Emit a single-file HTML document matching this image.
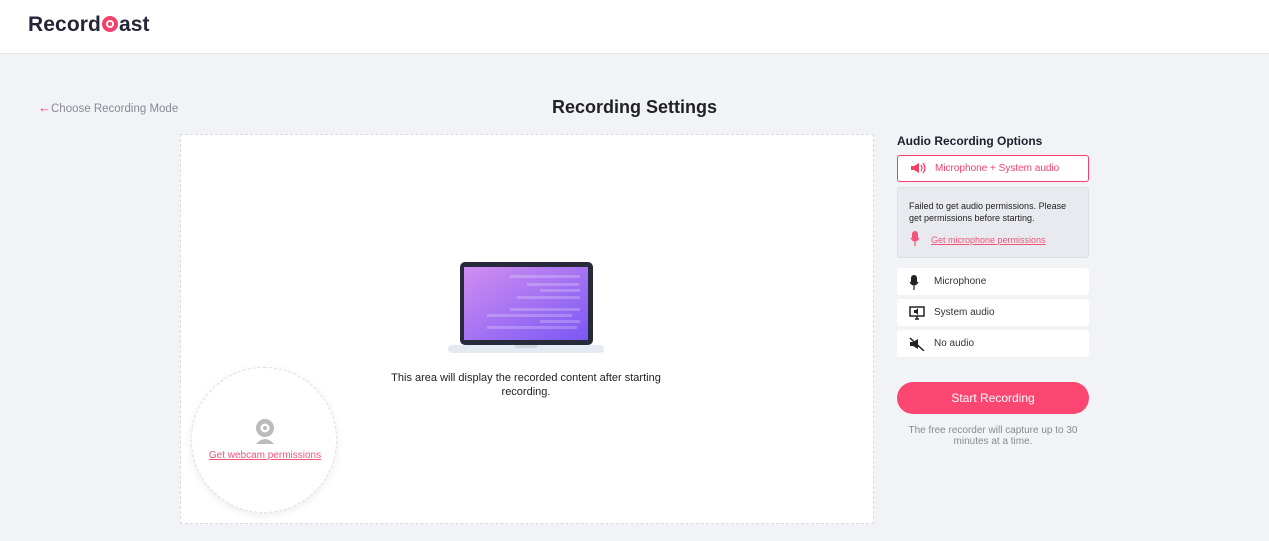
<!DOCTYPE html>
<html><head><style>
*{box-sizing:border-box;margin:0;padding:0}
body{width:1269px;height:541px;overflow:hidden;background:#f2f3f7;font-family:"Liberation Sans",sans-serif;position:relative}
.hdr{position:absolute;left:0;top:0;width:1269px;height:54px;background:#fff;border-bottom:1px solid #e6e7eb}
.logo{position:absolute;left:28px;top:13px;font-size:21px;font-weight:bold;color:#25253a;letter-spacing:0.1px}
.back{position:absolute;left:38px;top:100px;font-size:11.5px;color:#8a8a94}
.back b{color:#f43f6a;font-weight:bold;font-size:13px}
h1{position:absolute;left:0;width:1269px;text-align:center;top:97px;font-size:18px;font-weight:bold;color:#222}
.canvas{position:absolute;left:180px;top:134px;width:694px;height:390px;background:#fff;border:1px dashed #d8d9de}
.msg{position:absolute;left:385px;top:371px;width:282px;text-align:center;font-size:11px;line-height:14px;color:#222}
.cam{position:absolute;left:191px;top:367px;width:146px;height:146px;border-radius:50%;background:#fff;border:1px dashed #e0e0e4;box-shadow:0 2px 8px rgba(0,0,0,.08)}
.cam a{position:absolute;left:0;width:146px;text-align:center;top:82px;font-size:10px;color:#f0557a;text-decoration:underline}
.side{position:absolute;left:897px;width:192px}
.t{top:134px;font-size:12px;font-weight:bold;color:#1e1e2e}
.opt{position:absolute;left:897px;width:192px;height:27px;background:#fff;border-radius:3px;font-size:10px;color:#333;padding-left:37px;line-height:27px}
.opt svg{position:absolute;left:12px;top:7px}
.sel{border:1px solid #f43f6a;color:#f43f6a;line-height:25px}
.err{position:absolute;left:897px;top:187px;width:192px;height:71px;background:#e9eaef;border:1px solid #dedfe4;border-radius:3px;font-size:9px;color:#222;padding:12px 11px;line-height:12px}
.err a{position:absolute;left:33px;top:46px;color:#f0557a;text-decoration:underline}
.btn{position:absolute;left:897px;top:382px;width:192px;height:32px;border-radius:16px;background:#fb4672;color:#fff;text-align:center;line-height:32px;font-size:12px}
.note{position:absolute;left:897px;top:425px;width:192px;text-align:center;font-size:10px;line-height:11px;color:#8a8a94}
</style></head><body>
<div class="hdr"><div class="logo">Record<span style="display:inline-block;width:16px;height:16px;border-radius:50%;border:4px solid #f43f6a;position:relative;top:1px;margin:0 1px"><span style="position:absolute;left:2px;top:2px;width:4px;height:4px;border-radius:50%;background:#f43f6a"></span></span>ast</div></div>
<div class="back"><b>&#8592;</b>Choose Recording Mode</div>
<h1>Recording Settings</h1>
<div class="canvas"></div>
<svg style="position:absolute;left:447px;top:261px" width="158" height="93">
<defs><linearGradient id="g" x1="0" y1="0" x2="1" y2="1"><stop offset="0" stop-color="#d08ef0"/><stop offset="1" stop-color="#7b58f5"/></linearGradient></defs>
<rect x="13" y="1" width="133" height="83" rx="5" fill="#262a3a"/>
<rect x="17" y="6" width="124" height="73" fill="url(#g)"/>
<g fill="#fff" opacity=".22"><rect x="63" y="14" width="70" height="3"/><rect x="80" y="22" width="52" height="3"/><rect x="93" y="28" width="40" height="3"/><rect x="70" y="35" width="63" height="3"/><rect x="63" y="47" width="70" height="3"/><rect x="40" y="53" width="85" height="3"/><rect x="93" y="59" width="40" height="3"/><rect x="40" y="65" width="90" height="3"/></g>
<rect x="1" y="84" width="156" height="8" rx="4" fill="#e4e9f2"/><rect x="68" y="84" width="22" height="3" fill="#cfd5df"/>
</svg>
<div class="msg">This area will display the recorded content after starting recording.</div>
<div class="cam"><svg style="position:absolute;left:62px;top:50px" width="22" height="27"><circle cx="11" cy="10" r="9" fill="#bbb"/><circle cx="11" cy="10" r="4.5" fill="#fff"/><circle cx="11" cy="10" r="2" fill="#bbb"/><path d="M2 26 Q11 16 20 26Z" fill="#bbb"/></svg><a>Get webcam permissions</a></div>
<div class="side t" style="position:absolute">Audio Recording Options</div>
<div class="opt sel" style="top:155px"><svg width="16" height="12" style="top:6px"><path d="M1 4h3l5-3v10L4 8H1z" fill="#f43f6a"/><path d="M11 3q2 3 0 6M13 1q4 5 0 10" stroke="#f43f6a" fill="none" stroke-width="1.3"/></svg>Microphone + System audio</div>
<div class="err">Failed to get audio permissions. Please get permissions before starting.<svg style="position:absolute;left:12px;top:43px" width="10" height="15"><rect x="2" y="0" width="6" height="10" rx="3" fill="#f0557a"/><path d="M1 7q4 6 8 0M5 11v4" stroke="#f0557a" fill="none" stroke-width="1.2"/></svg><a>Get microphone permissions</a></div>
<div class="opt" style="top:268px"><svg width="10" height="15"><rect x="2" y="0" width="6" height="10" rx="3" fill="#222"/><path d="M1 7q4 6 8 0M5 11v4" stroke="#222" fill="none" stroke-width="1.2"/></svg>Microphone</div>
<div class="opt" style="top:299px"><svg width="16" height="14"><rect x="1" y="1" width="14" height="9" fill="none" stroke="#222" stroke-width="1.5"/><path d="M6 13h4M8 10v3" stroke="#222" stroke-width="1.5"/><path d="M5 4h2l2-2v7l-2-2H5z" fill="#222"/></svg>System audio</div>
<div class="opt" style="top:330px"><svg width="16" height="14"><path d="M1 5h3l5-3v10L4 9H1z" fill="#222"/><path d="M1 1l14 13" stroke="#222" stroke-width="1.5"/></svg>No audio</div>
<div class="btn">Start Recording</div>
<div class="note">The free recorder will capture up to 30 minutes at a time.</div>
</body></html>
